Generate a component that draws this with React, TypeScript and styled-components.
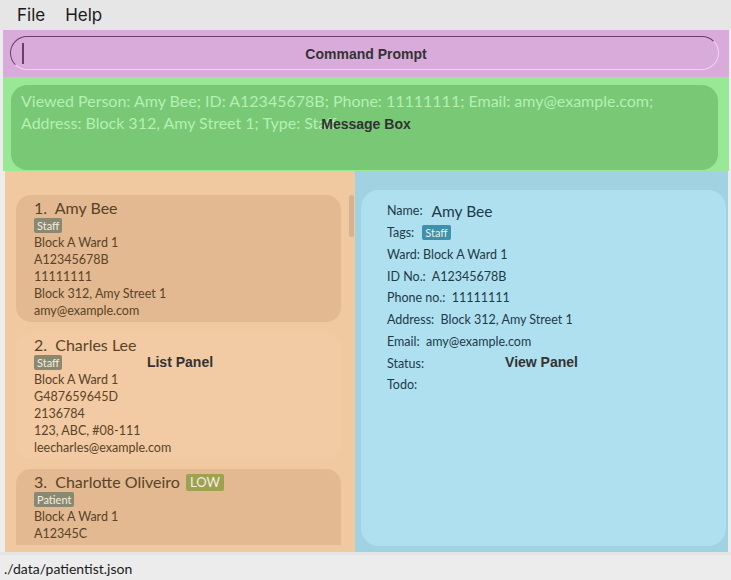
import React from "react";
import styled, { createGlobalStyle } from "styled-components";

const Global = createGlobalStyle`
  html, body { margin: 0; padding: 0; }
  body { font-family: "Lato", "Open Sans", sans-serif; background: #ececec; }
`;

const Window = styled.div`
  width: 731px;
  height: 580px;
  display: flex;
  flex-direction: column;
  background: #ececec;
  overflow: hidden;
`;

const MenuBar = styled.div`
  height: 30px;
  flex-shrink: 0;
  display: flex;
  align-items: center;
  gap: 20px;
  padding-left: 17px;
  background: #e6e6e6;
  font-family: "Inter", sans-serif;
  font-size: 17px;
  color: #1a1a1a;
`;

const Annotated = styled.div`
  position: relative;
`;

const Label = styled.span`
  position: absolute;
  left: 50%;
  top: 50%;
  transform: translate(-50%, -50%);
  font-family: "Liberation Sans", Arial, sans-serif;
  font-weight: bold;
  font-size: 14px;
  color: #333333;
  white-space: nowrap;
  pointer-events: none;
`;

const CommandSection = styled(Annotated)`
  flex-shrink: 0;
  margin: 0 2px 0 3px;
  height: 47px;
  background: #d9abdb;
  padding: 6px 10px 0 7px;
  box-sizing: border-box;
`;

const CommandInput = styled.div`
  height: 34px;
  border-radius: 17px;
  border: 1px solid #f0d4f0;
  border-top-color: #6b3d6b;
  border-left-color: #6b3d6b;
  box-sizing: border-box;
  display: flex;
  align-items: center;
  padding-left: 11px;
`;

const Caret = styled.div`
  width: 2px;
  height: 21px;
  background: #6b3d6b;
`;

const MessageSection = styled(Annotated)`
  flex-shrink: 0;
  margin: 0 2px 0 3px;
  height: 94px;
  background: #98e896;
  padding: 8px 11px 1px 8px;
  box-sizing: border-box;
`;

const MessageBox = styled.div`
  height: 100%;
  border-radius: 16px;
  background: #78c876;
  padding: 5px 10px;
  box-sizing: border-box;
  color: #b4f0b2;
  font-size: 16px;
  line-height: 22px;
`;

const MainRow = styled.div`
  flex-shrink: 0;
  display: flex;
  height: 381px;
  margin: 0 3px 0 5px;
`;

const ListSection = styled(Annotated)`
  width: 350px;
  background: #f0c9a1;
  padding: 24px 14px 7px 11px;
  box-sizing: border-box;
  overflow: hidden;
`;

const ListView = styled.div`
  height: 100%;
  overflow: hidden;
  display: flex;
  flex-direction: column;
  gap: 10px;
`;

const Scrollbar = styled.div`
  position: absolute;
  right: 1px;
  top: 24px;
  width: 5px;
  height: 42px;
  border-radius: 3px;
  background: rgba(150, 130, 110, 0.3);
`;

const Card = styled.div<{ $dark: boolean }>`
  flex-shrink: 0;
  background: ${(p) => (p.$dark ? "#e2b990" : "#f2caa3")};
  border-radius: 15px;
  padding: 4px 18px 3px 18px;
  color: #5a4328;
`;

const CardTitle = styled.div`
  display: flex;
  align-items: center;
  gap: 6px;
  font-size: 16px;
  line-height: 18px;
`;

const Tag = styled.span<{ $bg: string; $big?: boolean }>`
  display: inline-block;
  background: ${(p) => p.$bg};
  color: #f0eee0;
  font-size: ${(p) => (p.$big ? "13px" : "11px")};
  line-height: ${(p) => (p.$big ? "17px" : "15px")};
  padding: 0 ${(p) => (p.$big ? "4px" : "3px")};
  border-radius: 2px;
`;

const TagRow = styled.div`
  height: 17px;
  display: flex;
  align-items: center;
`;

const CardLine = styled.div`
  font-size: 12.5px;
  line-height: 17px;
`;

const ViewSection = styled(Annotated)`
  flex: 1;
  background: #a0d2e1;
  padding: 19px 2px 6px 6px;
  box-sizing: border-box;
`;

const ViewCard = styled.div`
  height: 100%;
  background: #afe0ef;
  border-radius: 18px;
  padding: 10px 26px;
  box-sizing: border-box;
  color: #1d3a48;
  display: flex;
  flex-direction: column;
`;

const Field = styled.div`
  height: 21.75px;
  flex-shrink: 0;
  display: flex;
  align-items: center;
  font-size: 12.5px;
  gap: 5px;
`;

const NameValue = styled.span`
  font-size: 15.5px;
  margin-left: 4px;
`;

const TagGap = styled.span`
  margin-left: 3px;
  display: inline-flex;
`;

const StatusBar = styled.div`
  flex: 1;
  display: flex;
  align-items: center;
  padding: 2px 0 0 4px;
  font-family: "Lato", sans-serif;
  font-size: 14px;
  color: #1a1a1a;
  background: #ececec;
  border-top: 3px solid #e4e4e4;
`;

type Person = {
  name: string;
  tags: string[];
  low?: boolean;
  lines: string[];
};

const people: Person[] = [
  {
    name: "Amy Bee",
    tags: ["Staff"],
    lines: ["Block A Ward 1", "A12345678B", "11111111", "Block 312, Amy Street 1", "amy@example.com"],
  },
  {
    name: "Charles Lee",
    tags: ["Staff"],
    lines: ["Block A Ward 1", "G487659645D", "2136784", "123, ABC, #08-111", "leecharles@example.com"],
  },
  {
    name: "Charlotte Oliveiro",
    tags: ["Patient"],
    low: true,
    lines: ["Block A Ward 1", "A12345C", "99272758", "Blk 30 Lorong 3 Serangoon Gardens"],
  },
];

export default function App() {
  return (
    <>
      <Global />
      <Window>
        <MenuBar>
          <span>File</span>
          <span>Help</span>
        </MenuBar>
        <CommandSection>
          <CommandInput>
            <Caret />
          </CommandInput>
          <Label>Command Prompt</Label>
        </CommandSection>
        <MessageSection>
          <MessageBox>
            Viewed Person: Amy Bee; ID: A12345678B; Phone: 11111111; Email: amy@example.com;
            <br />
            Address: Block 312, Amy Street 1; Type: Staff
          </MessageBox>
          <Label>Message Box</Label>
        </MessageSection>
        <MainRow>
          <ListSection>
            <ListView>
              {people.map((p, i) => (
                <Card key={p.name} $dark={i % 2 === 0}>
                  <CardTitle>
                    <span>
                      {i + 1}.&nbsp; {p.name}
                    </span>
                    {p.low && (
                      <Tag $bg="#9ea24e" $big>
                        LOW
                      </Tag>
                    )}
                  </CardTitle>
                  <TagRow>
                    {p.tags.map((t) => (
                      <Tag key={t} $bg="#8a8870">
                        {t}
                      </Tag>
                    ))}
                  </TagRow>
                  {p.lines.map((l) => (
                    <CardLine key={l}>{l}</CardLine>
                  ))}
                </Card>
              ))}
            </ListView>
            <Scrollbar />
            <Label>List Panel</Label>
          </ListSection>
          <ViewSection>
            <ViewCard>
              <Field>
                Name: <NameValue>Amy Bee</NameValue>
              </Field>
              <Field>
                Tags:
                <TagGap>
                  <Tag $bg="#3c91ad">Staff</Tag>
                </TagGap>
              </Field>
              <Field>Ward: Block A Ward 1</Field>
              <Field>ID No.: &nbsp;A12345678B</Field>
              <Field>Phone no.: &nbsp;11111111</Field>
              <Field>Address: &nbsp;Block 312, Amy Street 1</Field>
              <Field>Email: &nbsp;amy@example.com</Field>
              <Field>Status:</Field>
              <Field>Todo:</Field>
            </ViewCard>
            <Label>View Panel</Label>
          </ViewSection>
        </MainRow>
        <StatusBar>./data/patientist.json</StatusBar>
      </Window>
    </>
  );
}
